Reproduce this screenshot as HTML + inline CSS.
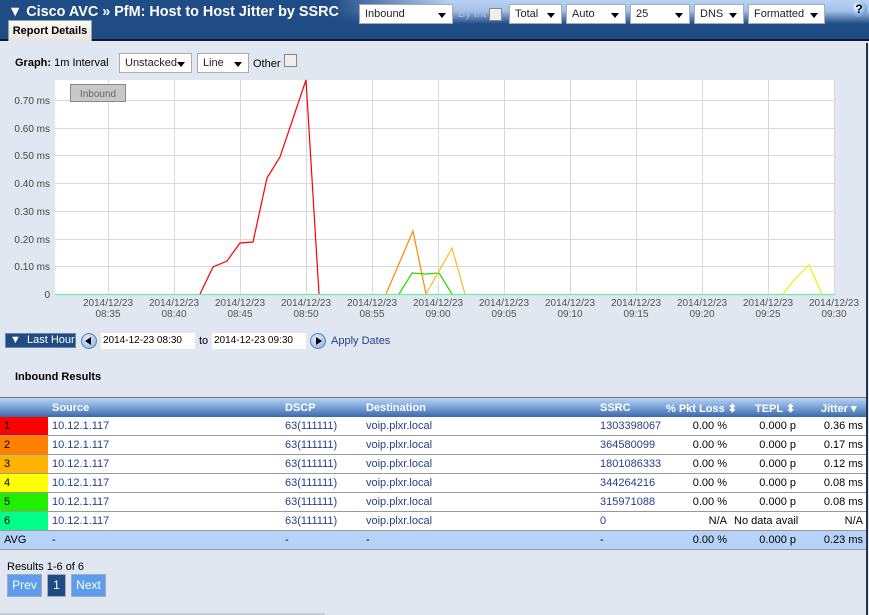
<!DOCTYPE html>
<html><head><meta charset="utf-8"><style>
*{margin:0;padding:0;box-sizing:border-box}
body{width:869px;height:615px;background:#e1e7f0;font-family:"Liberation Sans",Arial,sans-serif;font-size:11px;color:#000;position:relative;overflow:hidden}
.abs{position:absolute}
.bar{left:0;top:0;width:869px;height:41px;background:#1f4c84;border-bottom:2px solid #0b1a30}
.barlight{left:330px;top:0;width:539px;height:24px;background:linear-gradient(to bottom,#b9d3f3 0,#a4c1e9 45%,#1f4c84 100%)}
.barfade{left:330px;top:0;width:120px;height:24px;background:linear-gradient(to right,#1f4c84,rgba(31,76,132,0))}
.title{left:8px;top:4px;color:#fff;font-weight:bold;font-size:14.4px;white-space:nowrap}
.tab{left:8px;top:20px;width:84px;height:21px;background:linear-gradient(#fbfaf6,#e6e4dc);border:1px solid #8a9;border-bottom:none;font-weight:bold;font-size:11px;text-align:center;line-height:20px}
.sel{background:#fff;border:1px solid #aab;height:20px;font-size:11px;line-height:18px;padding-left:5px;color:#222}
.sel:after{content:"";position:absolute;right:6px;top:8px;border-left:4px solid transparent;border-right:4px solid transparent;border-top:5px solid #000}
.cb{width:13px;height:13px;background:#eee;border:1px solid #888}
.th{height:20px;background:linear-gradient(#b7d3f7,#6d96cf 60%,#3a68a8);color:#fff;font-weight:bold;font-size:11px}
.row{height:19px;background:#fff;border-bottom:1px solid #999;font-size:11px}
.c{position:absolute;top:3px;white-space:nowrap}
.th .c{top:4px}
.blue{color:#24408a}
.btn{height:23px;background:#5c9ded;border:1px solid #aab;color:#fff;font-size:12px;text-align:center;line-height:21px}
</style></head><body>
<div class="abs bar"></div>
<div class="abs barlight"></div>
<div class="abs barfade"></div>
<div class="abs title">▼ Cisco AVC » PfM: Host to Host Jitter by SSRC</div>
<div class="abs tab">Report Details</div>
<div class="abs sel" style="left:359px;top:4px;width:94px">Inbound</div>
<div class="abs" style="left:458px;top:8px;color:#a9c0e0;font-size:11px">By Int</div>
<div class="abs cb" style="left:489px;top:8px"></div>
<div class="abs sel" style="left:509px;top:4px;width:53px">Total</div>
<div class="abs sel" style="left:566px;top:4px;width:60px">Auto</div>
<div class="abs sel" style="left:630px;top:4px;width:60px">25</div>
<div class="abs sel" style="left:694px;top:4px;width:50px">DNS</div>
<div class="abs sel" style="left:748px;top:4px;width:77px">Formatted</div>
<div class="abs" style="left:851px;top:1px;width:16px;height:16px;border-radius:50%;background:radial-gradient(circle at 40% 35%,#fff,#6aa2e0 70%,#2a5fa8);color:#000;font-weight:bold;font-size:12px;text-align:center;line-height:16px">?</div>
<div class="abs" style="left:866px;top:43px;width:2px;height:572px;background:#23344f"></div>

<div class="abs" style="left:15px;top:57px;font-size:11px"><b>Graph:</b> 1m Interval</div>
<div class="abs sel" style="left:119px;top:53px;width:73px">Unstacked</div>
<div class="abs sel" style="left:197px;top:53px;width:52px">Line</div>
<div class="abs" style="left:253px;top:58px">Other</div>
<div class="abs cb" style="left:284px;top:54px"></div>

<svg class="abs" style="left:0;top:75px" width="869" height="250" viewBox="0 75 869 250" font-family="Liberation Sans,Arial,sans-serif">
<rect x="55" y="80" width="780" height="215" fill="#fff"/>
<g stroke="#d9d9d9" stroke-width="1">
<line x1="55" y1="100.5" x2="835" y2="100.5"/><line x1="55" y1="128.5" x2="835" y2="128.5"/><line x1="55" y1="155.5" x2="835" y2="155.5"/><line x1="55" y1="183.5" x2="835" y2="183.5"/><line x1="55" y1="211.5" x2="835" y2="211.5"/><line x1="55" y1="239.5" x2="835" y2="239.5"/><line x1="55" y1="266.5" x2="835" y2="266.5"/>
<line x1="108.5" y1="80" x2="108.5" y2="294"/><line x1="174.5" y1="80" x2="174.5" y2="294"/><line x1="240.5" y1="80" x2="240.5" y2="294"/><line x1="306.5" y1="80" x2="306.5" y2="294"/><line x1="372.5" y1="80" x2="372.5" y2="294"/><line x1="438.5" y1="80" x2="438.5" y2="294"/><line x1="504.5" y1="80" x2="504.5" y2="294"/><line x1="570.5" y1="80" x2="570.5" y2="294"/><line x1="636.5" y1="80" x2="636.5" y2="294"/><line x1="702.5" y1="80" x2="702.5" y2="294"/><line x1="768.5" y1="80" x2="768.5" y2="294"/><line x1="834.5" y1="80" x2="834.5" y2="294"/>
</g>
<g font-size="10" fill="#444" text-anchor="end">
<text x="50" y="104">0.70 ms</text><text x="50" y="132">0.60 ms</text><text x="50" y="159">0.50 ms</text><text x="50" y="187">0.40 ms</text><text x="50" y="215">0.30 ms</text><text x="50" y="243">0.20 ms</text><text x="50" y="270">0.10 ms</text><text x="50" y="298">0</text>
</g>
<g font-size="10" fill="#555" text-anchor="middle">
<text x="108" y="306">2014/12/23</text><text x="108" y="317">08:35</text>
<text x="174" y="306">2014/12/23</text><text x="174" y="317">08:40</text>
<text x="240" y="306">2014/12/23</text><text x="240" y="317">08:45</text>
<text x="306" y="306">2014/12/23</text><text x="306" y="317">08:50</text>
<text x="372" y="306">2014/12/23</text><text x="372" y="317">08:55</text>
<text x="438" y="306">2014/12/23</text><text x="438" y="317">09:00</text>
<text x="504" y="306">2014/12/23</text><text x="504" y="317">09:05</text>
<text x="570" y="306">2014/12/23</text><text x="570" y="317">09:10</text>
<text x="636" y="306">2014/12/23</text><text x="636" y="317">09:15</text>
<text x="702" y="306">2014/12/23</text><text x="702" y="317">09:20</text>
<text x="768" y="306">2014/12/23</text><text x="768" y="317">09:25</text>
<text x="834" y="306">2014/12/23</text><text x="834" y="317">09:30</text>
</g>
<g fill="none" stroke-width="1.2">
<polyline stroke="#66f0a8" points="55,294.5 835,294.5"/>
<polyline stroke="#ff0000" points="200,294 213,267 227,261 240,243 253,242 267,178 280,157 306,80 319,294"/>
<polyline stroke="#ff8800" points="386,294 413,231 426,294"/>
<polyline stroke="#22dd00" points="399,294 412,273 426,274 439,273 452,294"/>
<polyline stroke="#ffb820" points="426,294 452,248 465,294"/>
<polyline stroke="#eeee00" points="783,294 795,279 809,265 822,294"/>
</g>
<rect x="70.5" y="84.5" width="55" height="17" fill="#c8c8c8" stroke="#888"/>
<text x="98" y="97" font-size="10" fill="#666" text-anchor="middle">Inbound</text>
</svg>

<div class="abs" style="left:5px;top:333px;width:71px;height:15px;background:#1f4c84;border:1px solid #6a86b0;color:#fff;font-size:11px;line-height:13px;padding-left:4px;white-space:nowrap;overflow:hidden">▼ &nbsp;Last Hour</div>
<div class="abs" style="left:81px;top:333px;width:16px;height:16px;border-radius:50%;background:radial-gradient(circle at 40% 35%,#e8f2fc,#7eaad8);border:1px solid #5b82b5"></div>
<div class="abs" style="left:85px;top:337px;border-top:4px solid transparent;border-bottom:4px solid transparent;border-right:6px solid #000"></div>
<div class="abs" style="left:101px;top:333px;width:94px;height:16px;background:#fff;font-size:10px;line-height:16px;padding-left:2px">2014-12-23 08:30</div>
<div class="abs" style="left:199px;top:335px">to</div>
<div class="abs" style="left:212px;top:333px;width:94px;height:16px;background:#fff;font-size:10px;line-height:16px;padding-left:2px">2014-12-23 09:30</div>
<div class="abs" style="left:310px;top:333px;width:16px;height:16px;border-radius:50%;background:radial-gradient(circle at 40% 35%,#e8f2fc,#7eaad8);border:1px solid #5b82b5"></div>
<div class="abs" style="left:316px;top:337px;border-top:4px solid transparent;border-bottom:4px solid transparent;border-left:6px solid #000"></div>
<div class="abs" style="left:331px;top:335px;color:#24408a;font-size:11px">Apply Dates</div>
<div class="abs" style="left:15px;top:371px;font-weight:bold;font-size:11px">Inbound Results</div>

<div class="abs th" style="left:0;top:397px;width:866px;border-top:1px solid #777">
<span class="c" style="left:52px">Source</span><span class="c" style="left:285px">DSCP</span><span class="c" style="left:366px">Destination</span><span class="c" style="left:600px">SSRC</span><span class="c" style="left:666px">% Pkt Loss ⬍</span><span class="c" style="left:755px">TEPL ⬍</span><span class="c" style="left:821px">Jitter ▾</span>
</div>

<div class="abs" style="left:0;top:417px;width:866px">
<div class="row" style="position:relative"><div class="abs" style="left:0;top:0;width:48px;height:18px;background:#ff0000"></div><span class="c" style="left:4px">1</span><span class="c blue" style="left:52px">10.12.1.117</span><span class="c blue" style="left:285px">63(111111)</span><span class="c blue" style="left:366px">voip.plxr.local</span><span class="c blue" style="left:600px">1303398067</span><span class="c" style="right:139px">0.00 %</span><span class="c" style="right:70px">0.000 p</span><span class="c" style="right:3px">0.36 ms</span></div>
<div class="row" style="position:relative"><div class="abs" style="left:0;top:0;width:48px;height:18px;background:#ff8000"></div><span class="c" style="left:4px">2</span><span class="c blue" style="left:52px">10.12.1.117</span><span class="c blue" style="left:285px">63(111111)</span><span class="c blue" style="left:366px">voip.plxr.local</span><span class="c blue" style="left:600px">364580099</span><span class="c" style="right:139px">0.00 %</span><span class="c" style="right:70px">0.000 p</span><span class="c" style="right:3px">0.17 ms</span></div>
<div class="row" style="position:relative"><div class="abs" style="left:0;top:0;width:48px;height:18px;background:#ffb300"></div><span class="c" style="left:4px">3</span><span class="c blue" style="left:52px">10.12.1.117</span><span class="c blue" style="left:285px">63(111111)</span><span class="c blue" style="left:366px">voip.plxr.local</span><span class="c blue" style="left:600px">1801086333</span><span class="c" style="right:139px">0.00 %</span><span class="c" style="right:70px">0.000 p</span><span class="c" style="right:3px">0.12 ms</span></div>
<div class="row" style="position:relative"><div class="abs" style="left:0;top:0;width:48px;height:18px;background:#ffff00"></div><span class="c" style="left:4px">4</span><span class="c blue" style="left:52px">10.12.1.117</span><span class="c blue" style="left:285px">63(111111)</span><span class="c blue" style="left:366px">voip.plxr.local</span><span class="c blue" style="left:600px">344264216</span><span class="c" style="right:139px">0.00 %</span><span class="c" style="right:70px">0.000 p</span><span class="c" style="right:3px">0.08 ms</span></div>
<div class="row" style="position:relative"><div class="abs" style="left:0;top:0;width:48px;height:18px;background:#22ee00"></div><span class="c" style="left:4px">5</span><span class="c blue" style="left:52px">10.12.1.117</span><span class="c blue" style="left:285px">63(111111)</span><span class="c blue" style="left:366px">voip.plxr.local</span><span class="c blue" style="left:600px">315971088</span><span class="c" style="right:139px">0.00 %</span><span class="c" style="right:70px">0.000 p</span><span class="c" style="right:3px">0.08 ms</span></div>
<div class="row" style="position:relative"><div class="abs" style="left:0;top:0;width:48px;height:18px;background:#00ff88"></div><span class="c" style="left:4px">6</span><span class="c blue" style="left:52px">10.12.1.117</span><span class="c blue" style="left:285px">63(111111)</span><span class="c blue" style="left:366px">voip.plxr.local</span><span class="c blue" style="left:600px">0</span><span class="c" style="right:139px">N/A</span><span class="c" style="left:734px;width:64px;overflow:hidden">No data available</span><span class="c" style="right:3px">N/A</span></div>
<div class="row" style="position:relative;background:#b6d3f7"><span class="c" style="left:4px">AVG</span><span class="c" style="left:52px">-</span><span class="c" style="left:285px">-</span><span class="c" style="left:366px">-</span><span class="c" style="left:600px">-</span><span class="c" style="right:139px">0.00 %</span><span class="c" style="right:70px">0.000 p</span><span class="c" style="right:3px">0.23 ms</span></div>
</div>

<div class="abs" style="left:7px;top:561px;font-size:11px">Results 1-6 of 6</div>
<div class="abs btn" style="left:7px;top:574px;width:35px">Prev</div>
<div class="abs btn" style="left:47px;top:574px;width:19px;background:#1f4c84">1</div>
<div class="abs btn" style="left:71px;top:574px;width:35px">Next</div>
<div class="abs" style="left:0;top:613px;width:325px;height:2px;background:#c8ccd2"></div>
</body></html>
